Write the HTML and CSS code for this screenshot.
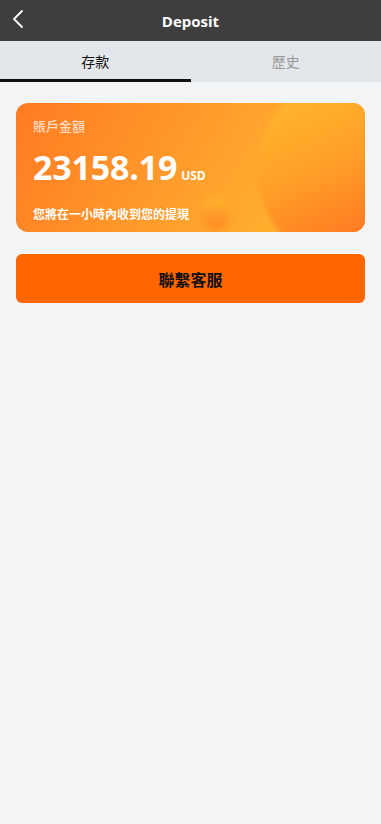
FILE: index.html
```html
<!DOCTYPE html>
<html>
<head>
<meta charset="utf-8">
<link rel="stylesheet" href="styles.css">
</head>
<body>
<div class="header">
  <svg class="back" width="14" height="20" viewBox="0 0 14 20"><path d="M11 2 L3 10 L11 18" fill="none" stroke="#fff" stroke-width="1.8" stroke-linecap="round" stroke-linejoin="round"/></svg>
  <div class="title">Deposit</div>
</div>
<div class="tabs">
  <div class="tab active">存款</div>
  <div class="tab">歷史</div>
</div>
<div class="content">
  <div class="card">
    <div class="orb big"></div>
    <div class="orb small"></div>
    <div class="label">賬戶金額</div>
    <div class="amount"><span class="num">23158.19</span><span class="cur">USD</span></div>
    <div class="note">您將在一小時內收到您的提現</div>
  </div>
  <button class="btn">聯繫客服</button>
</div>
</body>
</html>
```
FILE: styles.css
```css
* { box-sizing: border-box; }
html, body { margin: 0; padding: 0; }
body {
  width: 381px;
  min-height: 824px;
  background: #f3f4f6;
  font-family: "Open Sans", "Noto Sans CJK TC", sans-serif;
}
.header {
  height: 41px;
  background: #3e3e3e;
  display: flex;
  align-items: center;
  justify-content: center;
  position: relative;
}
.back { position: absolute; left: 11px; top: 9px; }
.title { color: #fff; font-weight: 700; font-size: 15px; }
.tabs {
  display: flex;
  height: 41px;
  background: #e3e6ea;
}
.tab {
  flex: 1;
  display: flex;
  align-items: center;
  justify-content: center;
  font-family: "Noto Sans CJK TC", sans-serif;
  font-size: 14px;
  color: #9a9a9a;
  border-bottom: 3px solid transparent;
  padding-top: 1px;
}
.tab.active { color: #111; border-bottom-color: #111; }
.content { padding: 21px 16px; }
.card {
  position: relative;
  overflow: hidden;
  height: 129px;
  border-radius: 12px;
  background: linear-gradient(120deg, #ff7a22 0%, #ff9a2b 45%, #ffae2e 75%, #ffa42a 100%);
  padding: 14px 17px;
  color: #fff;
}
.orb { position: absolute; border-radius: 50%; }
.orb.big {
  width: 190px; height: 190px;
  left: 241px; top: -28px;
  background: linear-gradient(155deg, #ffbf30 0%, #ff9e28 45%, #ff5a1e 100%);
  filter: blur(2px);
}
.orb.small {
  width: 28px; height: 34px;
  left: 186px; top: 93px;
  background: linear-gradient(180deg, #ffbe30 0%, #ff7a22 100%);
  filter: blur(4px);
  opacity: 0.8;
}
.label {
  position: relative;
  font-family: "Noto Sans CJK TC", sans-serif;
  font-size: 13px;
  font-weight: 500;
  color: #ffddc4;
  line-height: 18px;
}
.amount {
  position: relative;
  margin-top: 12px;
  display: flex;
  align-items: baseline;
  line-height: 40px;
}
.num { font-size: 34px; font-weight: 700; letter-spacing: -0.2px; }
.cur { font-size: 12px; font-weight: 700; margin-left: 4px; }
.note {
  position: relative;
  margin-top: 10px;
  font-family: "Noto Sans CJK TC", sans-serif;
  font-size: 12px;
  font-weight: 700;
  line-height: 16px;
}
.btn {
  display: block;
  width: 100%;
  height: 49px;
  margin-top: 22px;
  border: 0;
  border-radius: 6px;
  background: #ff6600;
  color: #111;
  font-family: "Noto Sans CJK TC", sans-serif;
  font-size: 16px;
  font-weight: 700;
}
```
